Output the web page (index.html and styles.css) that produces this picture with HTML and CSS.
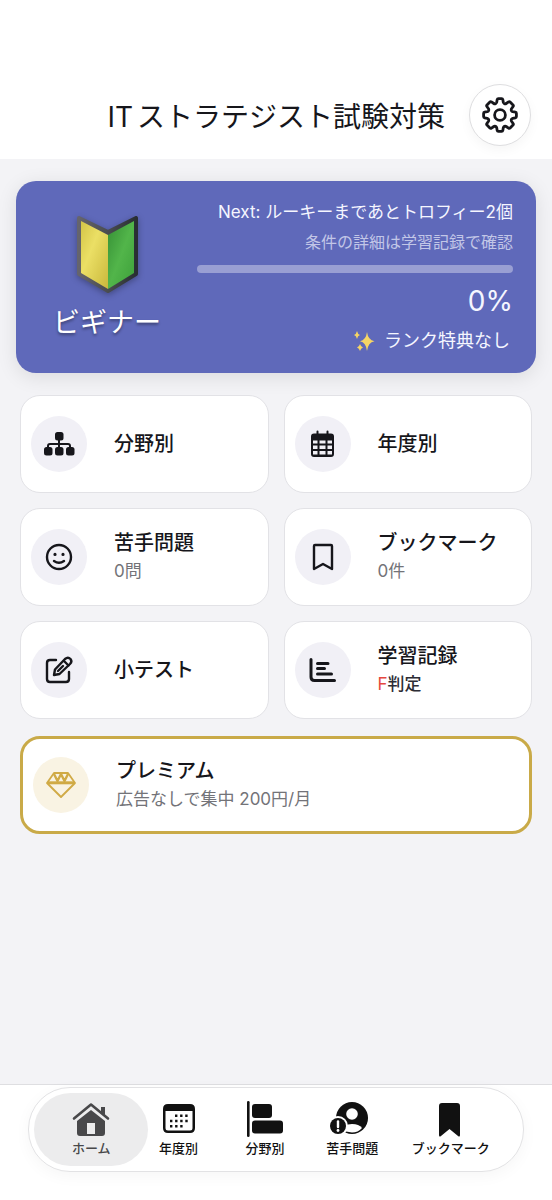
FILE: index.html
```html
<!DOCTYPE html>
<html lang="ja">
<head>
<meta charset="utf-8">
<meta name="viewport" content="width=device-width, initial-scale=1">
<title>ITストラテジスト試験対策</title>
<link rel="stylesheet" href="styles.css">
</head>
<body>
<header class="header">
  <h1 class="title"><span class="title-latin">IT</span>ストラテジスト試験対策</h1>
  <button class="settings" type="button" aria-label="設定">
    <svg width="38" height="38" viewBox="0 0 38 38" fill="none" stroke="currentColor" stroke-width="2.8" stroke-linejoin="round">
      <path d="M16.2 3.6Q16.4 2.6 17.4 2.6H20.6Q21.6 2.6 21.8 3.6L22.3 6.3Q22.5 7.2 23.4 7.6Q24.4 8 25.2 7.5L27.5 5.9Q28.4 5.3 29.1 6L32 8.9Q32.7 9.6 32.1 10.5L30.5 12.8Q30 13.6 30.4 14.6Q30.8 15.5 31.7 15.7L34.4 16.2Q35.4 16.4 35.4 17.4V20.6Q35.4 21.6 34.4 21.8L31.7 22.3Q30.8 22.5 30.4 23.4Q30 24.4 30.5 25.2L32.1 27.5Q32.7 28.4 32 29.1L29.1 32Q28.4 32.7 27.5 32.1L25.2 30.5Q24.4 30 23.4 30.4Q22.5 30.8 22.3 31.7L21.8 34.4Q21.6 35.4 20.6 35.4H17.4Q16.4 35.4 16.2 34.4L15.7 31.7Q15.5 30.8 14.6 30.4Q13.6 30 12.8 30.5L10.5 32.1Q9.6 32.7 8.9 32L6 29.1Q5.3 28.4 5.9 27.5L7.5 25.2Q8 24.4 7.6 23.4Q7.2 22.5 6.3 22.3L3.6 21.8Q2.6 21.6 2.6 20.6V17.4Q2.6 16.4 3.6 16.2L6.3 15.7Q7.2 15.5 7.6 14.6Q8 13.6 7.5 12.8L5.9 10.5Q5.3 9.6 6 8.9L8.9 6Q9.6 5.3 10.5 5.9L12.800 7.5Q13.6 8 14.6 7.6Q15.500 7.2 15.7 6.3Z"/>
      <circle cx="19" cy="19" r="5.4"/>
    </svg>
  </button>
</header>

<main class="main">
  <section class="rank">
    <div class="rank-badge">
      <svg width="64" height="80" viewBox="0 0 64 80" aria-hidden="true">
        <defs>
          <linearGradient id="yellow" x1="0" y1="0" x2="1" y2="1"><stop offset="0" stop-color="#d3c447"/><stop offset=".4" stop-color="#ebdf65"/><stop offset="1" stop-color="#c9b83c"/></linearGradient>
          <linearGradient id="green" x1="0" y1="0" x2="1" y2="1"><stop offset="0" stop-color="#358f35"/><stop offset=".5" stop-color="#52b54a"/><stop offset="1" stop-color="#3da03a"/></linearGradient>
          <linearGradient id="rim" x1="0" y1="0" x2="1" y2="0"><stop offset="0" stop-color="#65646c"/><stop offset=".5" stop-color="#4a4d50"/><stop offset="1" stop-color="#292e33"/></linearGradient>
        </defs>
        <path d="M4 3L33 17L61 3V59L33 76L4 59Z" fill="url(#rim)" stroke="url(#rim)" stroke-width="4" stroke-linejoin="round"/>
        <path d="M6 6L33 20V74L6 58Z" fill="url(#yellow)"/>
        <path d="M59 6L33 20V74L59 58Z" fill="url(#green)"/>
      </svg>
      <p class="rank-name">ビギナー</p>
    </div>
    <div class="rank-info">
      <p class="rank-next">Next: ルーキーまであとトロフィー2個</p>
      <p class="rank-note">条件の詳細は学習記録で確認</p>
      <div class="track" role="progressbar" aria-label="進捗" aria-valuemin="0" aria-valuemax="100" aria-valuenow="0"></div>
      <p class="rank-percent">0%</p>
      <p class="rank-perk">
        <svg width="22" height="22" viewBox="0 0 22 22" fill="#f5d565" aria-hidden="true">
          <path d="M14 2Q15 10 21.500 11.200Q15 12.400 14 21Q13 12.400 7 11.200Q13 10 14 2Z"/>
          <path d="M4 1Q4.700 4.300 7 5Q4.700 5.700 4 9Q3.300 5.700 1 5Q3.300 4.300 4 1Z"/>
          <path d="M7 14Q7.800 16.700 10 17.500Q7.800 18.300 7 21Q6.200 18.300 4 17.500Q6.200 16.700 7 14Z"/>
        </svg>
        <span>ランク特典なし</span>
      </p>
    </div>
  </section>

  <div class="menu">
    <button class="card" type="button">
      <span class="disc"><svg width="32" height="32" viewBox="0 0 32 32" fill="currentColor">
        <path d="M16 10V22M5 21V18Q5 16 7 16H25Q27 16 27 18V21" fill="none" stroke="currentColor" stroke-width="2"/>
        <rect x="12" y="4" width="8.500" height="8.500" rx="2.500"/><rect x="1" y="19" width="8.500" height="8.500" rx="2.500"/><rect x="12" y="19" width="8.500" height="8.500" rx="2.500"/><rect x="23" y="19" width="8.500" height="8.500" rx="2.500"/>
      </svg></span>
      <span class="text"><span class="name">分野別</span></span>
    </button>
    <button class="card" type="button">
      <span class="disc"><svg width="32" height="32" viewBox="0 0 32 32" fill="currentColor">
        <path fill-rule="evenodd" d="M7 5.500H24Q27 5.500 27 8.500V26Q27 29 24 29H7Q4 29 4 26V8.500Q4 5.500 7 5.500ZM6 12.500V15.500H10.500V12.500ZM12.500 12.500V15.500H18.500V12.500ZM20.500 12.500V15.500H25V12.500ZM6 17.500V21H10.500V17.500ZM12.500 17.500V21H18.500V17.500ZM20.500 17.500V21H25V17.500ZM6 23V26.500H10.500V23ZM12.500 23V26.500H18.500V23ZM20.500 23V26.500H25V23Z"/>
        <path d="M10.500 3.500V6M20.500 3.500V6" stroke="currentColor" stroke-width="2" stroke-linecap="round"/>
      </svg></span>
      <span class="text"><span class="name">年度別</span></span>
    </button>
    <button class="card" type="button">
      <span class="disc"><svg width="32" height="32" viewBox="0 0 32 32" fill="none" stroke="currentColor" stroke-width="2.400" stroke-linecap="round">
        <circle cx="16" cy="16" r="12"/><path d="M11 20Q16 23.600 21 20"/><path d="M12 13.400V13.500M20 13.400V13.500" stroke-width="3.200"/>
      </svg></span>
      <span class="text"><span class="name">苦手問題</span><span class="sub">0問</span></span>
    </button>
    <button class="card" type="button">
      <span class="disc"><svg width="32" height="32" viewBox="0 0 32 32" fill="none" stroke="currentColor" stroke-width="2.400" stroke-linejoin="round">
        <path d="M8 4H24Q25 4 25 5V28L16 23L7 28V5Q7 4 8 4Z"/>
      </svg></span>
      <span class="text"><span class="name">ブックマーク</span><span class="sub">0件</span></span>
    </button>
    <button class="card" type="button">
      <span class="disc"><svg width="32" height="32" viewBox="0 0 32 32" fill="none" stroke="currentColor" stroke-width="2.400" stroke-linecap="round" stroke-linejoin="round">
        <path d="M13 6H7Q4 6 4 9V25Q4 28 7 28H23Q26 28 26 25V18"/>
        <path d="M11 21L12 15.500L22 5Q25 2.500 27.500 5Q29.500 7.500 27 10L16.500 20Z"/>
        <path d="M21 7L25.500 11.500M15 17L20 12"/>
      </svg></span>
      <span class="text"><span class="name">小テスト</span></span>
    </button>
    <button class="card" type="button">
      <span class="disc"><svg width="32" height="32" viewBox="0 0 32 32" fill="none" stroke="currentColor" stroke-width="3" stroke-linecap="round">
        <path d="M4 5.500V23Q4 26.500 7.500 26.500H27.500"/><path d="M10.500 9.500H21M10.500 14.500H17.500M10.500 20H24.500"/>
      </svg></span>
      <span class="text"><span class="name">学習記録</span><span class="sub sub-strong"><span class="grade">F</span>判定</span></span>
    </button>
  </div>

  <button class="card card-premium" type="button">
    <span class="disc"><svg width="32" height="32" viewBox="0 0 32 32" fill="none" stroke="currentColor" stroke-width="1.800" stroke-linejoin="round">
      <path d="M9 4H23L30 14L16 28L2 14Z"/><path d="M3 13.800H29" stroke-width="3"/><path d="M9 5L12.500 12L16 5L19.500 12L23 5" stroke-width="2.400"/>
    </svg></span>
    <span class="text"><span class="name">プレミアム</span><span class="sub">広告なしで集中 200円/月</span></span>
  </button>
</main>

<footer class="footer">
  <nav class="tabs">
    <a class="tab tab-active" href="#home" aria-current="page">
      <svg width="40" height="38" viewBox="0 0 40 38" fill="currentColor">
        <path fill-rule="evenodd" d="M20 10L34 21V33Q34 36 31 36H9Q6 36 6 33V21ZM16 23V34H24V23Z"/>
        <path d="M3 18.500L20 4.500L37 18.500" fill="none" stroke="currentColor" stroke-width="2.600" stroke-linecap="round" stroke-linejoin="round"/>
        <path d="M30 7H34V16L30 12.500Z"/>
      </svg><span>ホーム</span>
    </a>
    <a class="tab" href="#years">
      <svg width="40" height="38" viewBox="0 0 40 38" fill="currentColor">
        <path fill-rule="evenodd" d="M9 4H31Q36 4 36 9V28Q36 33 31 33H9Q4 33 4 28V9Q4 4 9 4ZM6.500 11V28Q6.500 30.500 9 30.500H31Q33.500 30.500 33.500 28V11Z"/>
        <path d="M16 15.800H30M11 21H30M11 26.200H25" fill="none" stroke="currentColor" stroke-width="2.400" stroke-dasharray="2.400 2.700"/>
      </svg><span>年度別</span>
    </a>
    <a class="tab" href="#fields">
      <svg width="40" height="38" viewBox="0 0 40 38" fill="currentColor">
        <rect x="2" y="1" width="2.600" height="36" rx="1.300"/><rect x="7" y="4" width="20" height="14" rx="3"/><rect x="7" y="20.500" width="31" height="13" rx="3"/>
      </svg><span>分野別</span>
    </a>
    <a class="tab" href="#weak">
      <svg width="40" height="38" viewBox="0 0 40 38" fill="currentColor">
        <circle cx="20" cy="18" r="16"/><circle cx="20" cy="14" r="5.800" fill="#fff"/>
        <path d="M11 31Q11 24 20 24Q27 24 30 28Q26 32.500 20 32.500Z" fill="#fff"/>
        <circle cx="6" cy="26" r="10" fill="#fff"/><circle cx="6" cy="26" r="8"/>
        <path d="M6 21.500V27" stroke="#fff" stroke-width="2.400" stroke-linecap="round"/><circle cx="6" cy="30.500" r="1.400" fill="#fff"/>
      </svg><span>苦手問題</span>
    </a>
    <a class="tab" href="#bookmarks">
      <svg width="40" height="38" viewBox="0 0 40 38" fill="currentColor">
        <path d="M11 3H26Q29 3 29 6V35Q29 37.500 27 36L18.500 29L10 36Q8 37.500 8 35V6Q8 3 11 3Z"/>
      </svg><span>ブックマーク</span>
    </a>
  </nav>
</footer>
</body>
</html>
```

FILE: styles.css
```css
* {
  box-sizing: border-box;
}

body {
  margin: 0;
  min-height: 100vh;
  display: flex;
  flex-direction: column;
  background: #f3f3f6;
  color: #16161b;
  font-family: Inter, "Noto Sans CJK JP", sans-serif;
}

h1,
p {
  margin: 0;
  font-weight: 400;
}

svg {
  display: block;
  flex: none;
  overflow: visible;
}

button {
  font: inherit;
  color: inherit;
  cursor: pointer;
}

.header {
  display: flex;
  align-items: center;
  justify-content: flex-end;
  gap: 24px;
  padding: 84px 21px 13px;
  background: #fff;
}

.title {
  padding-top: 3px;
  font-size: 28px;
  line-height: 40px;
  white-space: nowrap;
}

.title-latin {
  margin-right: 4px;
}

.settings {
  display: flex;
  align-items: center;
  justify-content: center;
  width: 62px;
  height: 62px;
  flex: none;
  padding: 0;
  border: 1px solid #dedee0;
  border-radius: 50%;
  background: #fff;
  box-shadow: 0 4px 12px rgba(0, 0, 0, 0.04);
}

.main {
  flex: 1;
  display: flex;
  flex-direction: column;
  padding: 22px 16px;
}

.rank {
  display: flex;
  justify-content: space-between;
  padding: 19px 23px 20px 32px;
  border-radius: 20px;
  background: #5f69ba;
  color: #f5f6ff;
  box-shadow: 0 4px 20px rgba(0, 0, 0, 0.1);
}

.rank-badge {
  display: flex;
  flex-direction: column;
  align-items: center;
  gap: 8px;
  width: 118px;
  padding-top: 15px;
}

.rank-badge svg {
  filter: drop-shadow(0 2px 3px rgba(0, 0, 0, 0.3));
}

.rank-name {
  font-size: 27px;
  line-height: 40px;
  color: #fff;
  text-shadow: 0 2px 3px rgba(0, 0, 0, 0.4);
}

.rank-info {
  display: flex;
  flex-direction: column;
  width: 316px;
  text-align: right;
}

.rank-next {
  font-size: 17px;
  line-height: 24px;
}

.rank-note {
  margin-top: 6px;
  font-size: 16px;
  line-height: 24px;
  color: #c2c6e7;
}

.track {
  height: 8px;
  margin-top: 11px;
  border-radius: 4px;
  background: #999fd3;
}

.rank-percent {
  margin-top: 8px;
  font-size: 28px;
  line-height: 40px;
}

.rank-perk {
  display: flex;
  align-items: center;
  justify-content: flex-end;
  gap: 9px;
  margin-top: 8px;
  padding-right: 3px;
  font-size: 18px;
  line-height: 24px;
}

.menu {
  display: grid;
  grid-template-columns: 1fr 1fr;
  gap: 15px;
  margin: 22px 4px 17px;
}

.card {
  display: flex;
  align-items: center;
  gap: 27px;
  min-height: 98px;
  padding: 10px;
  border: 1px solid #e2e2e6;
  border-radius: 20px;
  background: #fff;
  text-align: left;
}

.card-premium {
  margin: 0 4px;
  border: 3px solid #c9aa48;
}

.disc {
  display: flex;
  align-items: center;
  justify-content: center;
  width: 56px;
  height: 56px;
  flex: none;
  border-radius: 50%;
  background: #f1f0f6;
}

.card-premium .disc {
  background: #f9f3e3;
  color: #d0aa45;
}

.text {
  display: flex;
  flex-direction: column;
}

.name {
  font-size: 20px;
  font-weight: 500;
  line-height: 28px;
}

.sub {
  font-size: 17px;
  line-height: 28px;
  color: #737378;
}

.sub-strong {
  font-weight: 500;
  color: #2c2c35;
}

.grade {
  font-weight: 400;
  color: #e5483f;
}

.footer {
  padding: 2px 28px 28px;
  border-top: 1px solid #dedee1;
  background: #fff;
}

.tabs {
  display: grid;
  grid-template-columns: 114fr 60fr 112fr 62fr 134fr;
  padding: 5px;
  border: 1px solid #e2e2e4;
  border-radius: 42px;
  box-shadow: 0 4px 16px rgba(0, 0, 0, 0.04);
}

.tab {
  display: flex;
  flex-direction: column;
  align-items: center;
  padding: 7px 0 8px;
  border-radius: 37px;
  color: #111;
  font-size: 13px;
  font-weight: 500;
  line-height: 20px;
  text-decoration: none;
  white-space: nowrap;
}

.tab-active {
  background: #ececed;
  color: #48484a;
}
```
